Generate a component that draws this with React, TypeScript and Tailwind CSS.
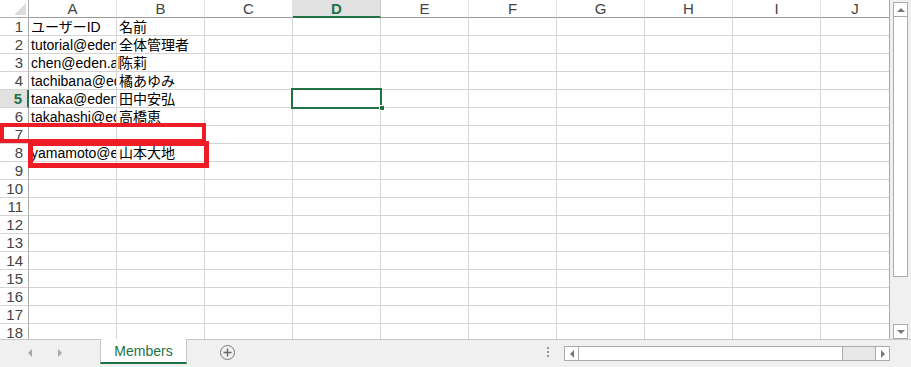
import { Fragment } from "react";

const cols = ["A", "B", "C", "D", "E", "F", "G", "H", "I", "J"];

const data: { [row: number]: [string, string] } = {
  1: ["ユーザーID", "名前"],
  2: ["tutorial@eden.co.jp", "全体管理者"],
  3: ["chen@eden.ac.jp", "陈莉"],
  4: ["tachibana@eden.co.jp", "橘あゆみ"],
  5: ["tanaka@eden.co.jp", "田中安弘"],
  6: ["takahashi@eden.co.jp", "高橋恵"],
  8: ["yamamoto@eden.co.jp", "山本大地"],
};

const rows = Array.from({ length: 19 }, (_, i) => i + 1);

function Tri({ dir }: { dir: "up" | "down" | "left" | "right" }) {
  const pts = {
    up: "0,5 8,5 4,1",
    down: "0,1 8,1 4,5",
    left: "5,0 5,8 1,4",
    right: "1,0 1,8 5,4",
  }[dir];
  const box = dir === "up" || dir === "down" ? "0 0 8 6" : "0 0 6 8";
  return (
    <svg viewBox={box} className={dir === "up" || dir === "down" ? "w-2 h-1.5" : "w-1.5 h-2"}>
      <polygon points={pts} fill="#777" />
    </svg>
  );
}

export default function App() {
  return (
    <div
      className="w-[911px] h-[367px] overflow-hidden bg-white flex flex-col relative"
      style={{ fontFamily: '"Liberation Sans", "Noto Sans CJK JP", sans-serif' }}
    >
      <div className="h-[339px] flex overflow-hidden">
        {/* sheet grid */}
        <div className="w-[890px] border-r border-[#ababab] overflow-hidden">
          <div className="grid grid-cols-[29px_repeat(9,88px)_69px]">
            {/* header row */}
            <div className="h-[18px] border-r border-b border-[#ababab] bg-white relative">
              <svg className="absolute right-[2px] bottom-[2px] w-3 h-3" viewBox="0 0 12 12">
                <polygon points="12,0 12,12 0,12" fill="#dcdcdc" />
              </svg>
            </div>
            {cols.map((c) =>
              c === "D" ? (
                <div
                  key={c}
                  className="h-[18px] bg-[#e1e1e1] border-r border-[#c6c6c6] border-b-2 border-b-[#217346] flex items-center justify-center text-[15px] font-bold text-[#217346] leading-none"
                >
                  {c}
                </div>
              ) : (
                <div
                  key={c}
                  className="h-[18px] border-r border-[#e1e1e1] border-b border-b-[#9b9b9b] flex items-center justify-center text-[15px] text-[#444] leading-none"
                >
                  {c}
                </div>
              ),
            )}
            {rows.map((r) => (
              <Fragment key={r}>
                <div
                  className={`h-[18px] border-b border-[#d4d4d4] pr-[5px] flex items-center justify-end text-[15px] leading-none ${
                    r === 5
                      ? "bg-[#e1e1e1] border-r-2 border-r-[#217346] text-[#217346] font-bold"
                      : "border-r border-r-[#ababab] text-[#444]"
                  }`}
                >
                  {r}
                </div>
                {cols.map((c, ci) => (
                  <div
                    key={c}
                    className="h-[18px] border-r border-b border-[#d4d4d4] overflow-hidden whitespace-nowrap pl-[2px] text-[14px] leading-[18px] text-black relative"
                  >
                    {ci < 2 && data[r] ? data[r][ci] : ""}
                    {r === 3 && ci === 1 && (
                      <span className="absolute left-[1px] top-[2px] w-[2px] h-[13px] bg-[#e8a040]" />
                    )}
                  </div>
                ))}
              </Fragment>
            ))}
          </div>
        </div>
        {/* vertical scrollbar */}
        <div className="w-[21px] bg-[#f0f0f0] flex flex-col items-center pt-[2px]">
          <div className="w-[15px] h-[15px] border border-[#ababab] bg-white flex items-center justify-center">
            <Tri dir="up" />
          </div>
          <div className="w-[15px] h-[260px] border border-t-0 border-[#ababab] bg-white" />
          <div className="flex-1" />
          <div className="w-[15px] h-[15px] border border-[#ababab] bg-white flex items-center justify-center">
            <Tri dir="down" />
          </div>
        </div>
      </div>

      {/* tab bar */}
      <div className="h-[28px] bg-[#f0f0f0] border-t border-[#c6c6c6] flex items-start">
        <div className="w-[100px] h-[26px] flex items-center pl-[27px] gap-[24px] opacity-60">
          <Tri dir="left" />
          <Tri dir="right" />
        </div>
        <div className="w-[87px] h-[25px] -mt-px bg-white border-x border-[#c6c6c6] border-b-2 border-b-[#217346] flex items-center justify-center text-[14px] text-[#217346] leading-none">
          Members
        </div>
        <div className="ml-[33px] mt-[5px] w-[15px] h-[15px] rounded-full border border-[#777] flex items-center justify-center">
          <svg viewBox="0 0 9 9" className="w-[9px] h-[9px]">
            <path d="M4.5 0.5v8M0.5 4.5h8" stroke="#666" strokeWidth="1.4" />
          </svg>
        </div>
        <div className="ml-[312px] mt-[7px] flex flex-col gap-[2px]">
          <span className="w-[2px] h-[2px] bg-[#999]" />
          <span className="w-[2px] h-[2px] bg-[#999]" />
          <span className="w-[2px] h-[2px] bg-[#999]" />
        </div>
        <div className="ml-[15px] mt-[6px] w-[326px] h-[15px] flex border border-[#ababab] bg-[#e8e8e8]">
          <div className="w-[14px] border-r border-[#ababab] bg-white flex items-center justify-center">
            <Tri dir="left" />
          </div>
          <div className="w-[264px] border-r border-[#ababab] bg-white" />
          <div className="flex-1" />
          <div className="w-[14px] border-l border-[#ababab] bg-white flex items-center justify-center">
            <Tri dir="right" />
          </div>
        </div>
      </div>

      {/* active cell D5 */}
      <div className="absolute left-[291px] top-[88px] w-[91px] h-[21px] border-2 border-[#217346]" />
      <div className="absolute left-[379px] top-[105px] w-[6px] h-[6px] bg-[#217346] border border-white" />

      {/* annotation boxes */}
      <div className="absolute left-0 top-[123px] w-[206px] h-[20px] border-[4px] border-[#ee1c25]" />
      <div className="absolute left-[28px] top-[141px] w-[181px] h-[27px] border-[5px] border-[#ee1c25]" />
    </div>
  );
}
